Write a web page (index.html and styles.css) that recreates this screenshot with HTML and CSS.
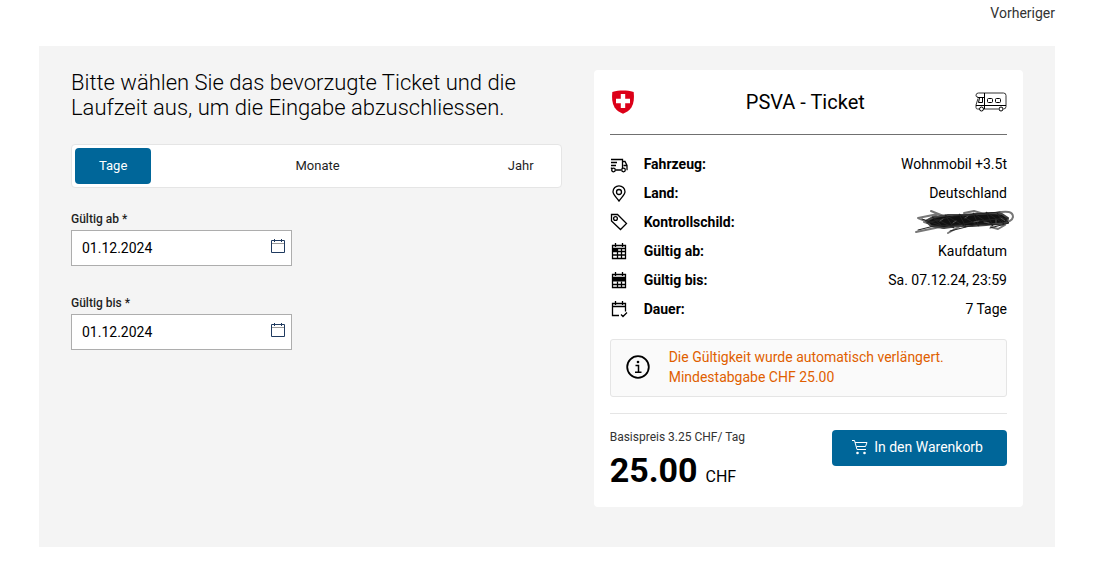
FILE: index.html
```
<!DOCTYPE html>
<html lang="de">
<head>
  <meta charset="UTF-8" />
  <meta name="viewport" content="width=device-width, initial-scale=1.0"/>
  <title>PSVA - Ticket</title>
  <link rel="stylesheet" href="styles.css">
</head>
<body>

  <nav class="top-nav">
    <a href="#">Vorheriger</a>
  </nav>

  <main class="panel">
    <section class="selection">
      <h1>Bitte wählen Sie das bevorzugte Ticket und die Laufzeit aus, um die Eingabe abzuschliessen.</h1>

      <div class="tabs">
        <button type="button" class="tab active">Tage</button>
        <button type="button" class="tab">Monate</button>
        <button type="button" class="tab">Jahr</button>
      </div>

      <div class="field">
        <label for="validFrom">Gültig ab *</label>
        <div class="date-box">
          <input type="text" id="validFrom" value="01.12.2024" />
          <button type="button" class="date-btn" aria-label="Kalender">
            <svg width="16" height="16" viewBox="0 0 16 16"><path d="M1.500 2.500h13v12h-13z"/><path class="bar" d="M2 5.500h12"/><path d="M4.500 1v3M11.500 1v3"/></svg>
          </button>
        </div>
      </div>

      <div class="field">
        <label for="validTo">Gültig bis *</label>
        <div class="date-box">
          <input type="text" id="validTo" value="01.12.2024" />
          <button type="button" class="date-btn" aria-label="Kalender">
            <svg width="16" height="16" viewBox="0 0 16 16"><path d="M1.500 2.500h13v12h-13z"/><path class="bar" d="M2 5.500h12"/><path d="M4.500 1v3M11.500 1v3"/></svg>
          </button>
        </div>
      </div>
    </section>

    <section class="card">
      <header class="card-header">
        <svg class="shield" width="26" height="24" viewBox="0 0 26 24">
          <path fill="#dc0018" d="M2.300 2C6 .9 9.500.5 13 .5S20 .9 23.700 2C24.300 8 24 13 21.500 17.300 19.500 20.500 16.500 22.500 13 23.700 9.500 22.500 6.500 20.500 4.500 17.300 2 13 1.700 8 2.300 2z"/>
          <path fill="#fff" d="M10.800 4h4.400v4.800H20v4.400h-4.800V18h-4.400v-4.800H6V8.800h4.800z"/>
        </svg>
        <h2>PSVA - Ticket</h2>
        <svg class="camper" width="32" height="20" viewBox="0 0 32 20">
          <path class="body" d="M3.500 1H28.500Q31 1 31 3.500V14.500Q31 17 28.500 17M23.500 17H9M4 17H2.500Q1 17 1 15.500V13L3 6.500M3 5H2Q.8 4.500 1 3 1.300 1 3.500 1"/>
          <path d="M9.500 1V17M1 13.500H31M2.500 5.500H9M3.500 10.500H7.500V6M3.500 10.500 4.500 6"/>
          <rect x="12.500" y="6.500" width="5" height="4" rx="1"/>
          <rect x="20.500" y="6.500" width="5" height="4" rx="1"/>
          <circle cx="6.500" cy="17" r="2"/>
          <circle cx="26" cy="17" r="2"/>
        </svg>
      </header>

      <dl class="details">
        <div class="row">
          <svg class="icon" width="18" height="18" viewBox="0 0 18 18"><path d="M1 4.500H12.500V14M1 7.500H7M1 10.500H6M1.500 14V12.500M5.500 15H11M12.500 6.500H15L17 10.500V14.500H16.500M13.500 10.500H17"/><circle cx="3.500" cy="15" r="1.800"/><circle cx="13.500" cy="15" r="1.800"/></svg>
          <dt>Fahrzeug:</dt>
          <dd>Wohnmobil +3.5t</dd>
        </div>
        <div class="row">
          <svg class="icon" width="18" height="18" viewBox="0 0 18 18"><path d="M9 17C6 13 3 10.500 3 7.800A6 6 0 0 1 15 7.800C15 10.500 12 13 9 17z"/><circle cx="9" cy="8" r="2.500"/></svg>
          <dt>Land:</dt>
          <dd>Deutschland</dd>
        </div>
        <div class="row">
          <svg class="icon" width="18" height="18" viewBox="0 0 18 18"><path d="M1.500 1.500H7.500L16.500 10.500 10.500 16.500 1.500 8z"/><circle cx="5.500" cy="5.500" r="1.900"/></svg>
          <dt>Kontrollschild:</dt>
          <dd>
            <svg class="scribble" width="100" height="26" viewBox="0 0 100 26" role="img" aria-label="geschwärzt">
              <path class="soft" d="M2 23 26 18 4 9 24 5 10 13 30 19M17 2 32 8 26 12M34 24 50 15 76 14M50 4 60 2 70 5M82 4Q99 0 99 8 98 13 88 14M77 18 84 20 91 16"/>
              <path class="ink" d="M12 12 20 8 34 6 48 6 62 5 78 4 88 5 94 9 93 14 82 15 72 16 58 17 44 17 30 19 17 17z"/>
              <path class="line" d="M8 10 28 17 18 8 40 19 31 6 52 18 45 5 65 17 59 4 79 17 72 3 90 15 83 4 95 14 76 19M4 21 20 17 45 16 64 12 94 9M13 14 40 7 86 3M36 22 64 15 89 16"/>
              <path class="glint" d="M26 12 29 10M39 14 42 12M51 9 54 7M60 13 65 12M70 13 75 14M82 11 82 14M87 9 91 12"/>
            </svg>
          </dd>
        </div>
        <div class="row">
          <svg class="icon" width="18" height="18" viewBox="0 0 18 18"><path d="M2.500 3.500h13v13h-13zM2.500 6.500h13M2.500 9.500h13M2.500 13h13M7.500 6.500v10M11.500 6.500v10M5.500 1v4M12.500 1v4"/><path class="solid" d="M3 6.500h4.500v3H3z"/></svg>
          <dt>Gültig ab:</dt>
          <dd>Kaufdatum</dd>
        </div>
        <div class="row">
          <svg class="icon" width="18" height="18" viewBox="0 0 18 18"><path d="M2.500 3.500h13v13h-13zM2.500 6.500h13M2.500 13.500h13M7.500 10.500v6M11.500 10.500v6M5.500 1v4M12.500 1v4"/><path class="solid" d="M3 6.500h12.500v4H3z"/></svg>
          <dt>Gültig bis:</dt>
          <dd>Sa. 07.12.24, 23:59</dd>
        </div>
        <div class="row">
          <svg class="icon" width="18" height="18" viewBox="0 0 18 18"><path d="M9 15.500H2.500V3.500H15.500V11.500M2.500 6.500h13M5.500 1v4M12.500 1v4M11 14.500 13 16.500 17 12.500"/></svg>
          <dt>Dauer:</dt>
          <dd>7 Tage</dd>
        </div>
      </dl>

      <div class="notice">
        <svg width="24" height="24" viewBox="0 0 24 24">
          <circle cx="12" cy="12" r="10.800"/>
          <path class="stem" d="M9.500 10.500h3V17M9 17.200h6.500"/>
          <circle class="dot" cx="12" cy="7" r="1.300"/>
        </svg>
        <p>Die Gültigkeit wurde automatisch verlängert.<br>Mindestabgabe CHF 25.00</p>
      </div>

      <footer class="checkout">
        <div>
          <p class="base-price">Basispreis 3.25 CHF/ Tag</p>
          <p class="total"><strong>25.00</strong> <span>CHF</span></p>
        </div>
        <button type="button" class="cart-btn">
          <svg width="16" height="16" viewBox="0 0 16 16"><path d="M0 1.500H2.500L5 10.500H14M3 3.500H15L13.500 7.500H4.500"/><circle class="wheel" cx="5.500" cy="14" r="1.300"/><circle class="wheel" cx="12.500" cy="14" r="1.300"/></svg>
          In den Warenkorb
        </button>
      </footer>
    </section>
  </main>

</body>
</html>
```

FILE: styles.css
```
* {
  box-sizing: border-box;
}

body {
  margin: 0;
  padding: 0 59px 32px 39px;
  background: #fff;
  color: #000;
  font-family: Roboto, "Liberation Sans", sans-serif;
  font-size: 14px;
  line-height: 20px;
}

h1, h2, p, dl, dd {
  margin: 0;
}

svg {
  flex: none;
  fill: none;
  stroke: #000;
}

button, input {
  font-family: inherit;
}

button {
  border: none;
  cursor: pointer;
}

.top-nav {
  display: flex;
  justify-content: flex-end;
  padding: 3px 0 23px;
}

.top-nav a {
  color: #333;
  text-decoration: none;
}

.panel {
  display: grid;
  grid-template-columns: 8fr 7fr;
  align-items: start;
  gap: 32px;
  padding: 24px 32px 40px;
  background: #f4f4f4;
}

h1 {
  margin-bottom: 24px;
  font-size: 22px;
  font-weight: 300;
  line-height: 25px;
}

/* duration tabs */
.tabs {
  display: flex;
  justify-content: space-between;
  margin-bottom: 21px;
  padding: 3px;
  background: #fff;
  border: 1px solid #e5e5e5;
  border-radius: 4px;
}

.tab {
  height: 36px;
  padding: 0 24px 2px;
  background: none;
  border-radius: 4px;
  color: #1f1f1f;
  font-size: 13px;
}

.tab.active {
  background: #006699;
  color: #fff;
}

/* date fields */
.field {
  width: 221px;
  max-width: 100%;
  margin-bottom: 27px;
}

.field label {
  display: block;
  margin-bottom: 1px;
  color: #1f1f1f;
  font-size: 12px;
  font-weight: 500;
}

.date-box {
  display: flex;
  align-items: center;
  height: 36px;
  background: #fff;
  border: 1px solid #adadad;
}

.date-box input {
  flex: 1;
  min-width: 0;
  padding: 0 0 0 10px;
  border: none;
  outline: none;
  background: none;
  font-size: 14px;
}

.date-btn {
  display: flex;
  padding: 0 5px 4px;
  background: none;
}

.date-btn svg {
  stroke: #1f3a5f;
}

.date-btn .bar {
  stroke: #999;
  stroke-width: 1;
}

/* ticket card */
.card {
  padding: 16px 16px 10px;
  background: #fff;
  border-radius: 4px;
}

.card-header {
  display: flex;
  align-items: center;
  justify-content: space-between;
  padding-bottom: 16px;
  border-bottom: 1px solid #707070;
}

.card-header h2 {
  font-size: 20px;
  font-weight: 400;
  line-height: 32px;
}

.shield {
  stroke: none;
}

.camper .body {
  stroke: #333;
}

.details {
  display: grid;
  gap: 9px;
  padding: 19px 0 20px;
}

.row {
  display: flex;
  align-items: center;
}

.icon {
  margin-right: 16px;
  stroke-width: 1.3;
}

.icon .solid {
  fill: #000;
  stroke: none;
}

.row dt {
  font-weight: 700;
}

.row dd {
  display: flex;
  justify-content: flex-end;
  flex: 1;
  height: 20px;
}

/* the plate number is blacked out by hand */
.scribble {
  margin: -3px -7px 0 0;
  stroke-linecap: round;
  stroke-linejoin: round;
}

.scribble .soft {
  stroke: #777;
  stroke-width: 2;
}

.scribble .ink {
  fill: #111;
  stroke: #444;
  stroke-width: 2;
}

.scribble .line {
  stroke: #222;
  stroke-width: 1;
}

.scribble .glint {
  stroke: #555;
  stroke-width: 1;
}

.notice {
  display: flex;
  align-items: center;
  gap: 19px;
  margin-bottom: 16px;
  padding: 7px 15px 9px;
  background: #fafafa;
  border: 1px solid #e5e5e5;
  border-radius: 3px;
  color: #e05f00;
}

.notice svg {
  stroke-width: 1.8;
}

.notice .stem {
  stroke-width: 1.5;
}

.notice .dot {
  fill: #000;
  stroke: none;
}

.checkout {
  display: flex;
  align-items: flex-start;
  justify-content: space-between;
  padding-top: 16px;
  border-top: 1px solid #e5e5e5;
}

.base-price {
  color: #333;
  font-size: 12px;
  line-height: 14px;
}

.total {
  padding-top: 6px;
  font-size: 16px;
  line-height: 40px;
}

.total strong {
  margin-right: 4px;
  font-size: 34px;
}

.cart-btn {
  display: flex;
  align-items: center;
  gap: 6px;
  height: 36px;
  padding: 0 24px 2px 20px;
  background: #006699;
  border-radius: 4px;
  color: #fff;
  font-size: 14px;
}

.cart-btn svg {
  stroke: #fff;
}

.cart-btn .wheel {
  fill: #fff;
  stroke: none;
}
```
